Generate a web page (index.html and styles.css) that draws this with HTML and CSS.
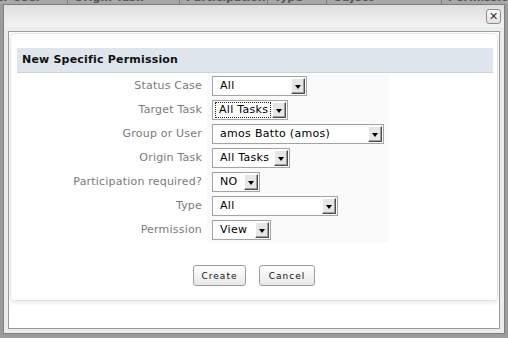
FILE: index.html
```html
<!DOCTYPE html>
<html lang="en">
<head>
  <meta charset="UTF-8" />
  <title>New Specific Permission</title>
  <link rel="stylesheet" href="styles.css">
</head>
<body>

  <div class="grid-head">
    <div class="grid-row">
      <div class="col c1">er User</div>
      <div class="col c2">Origin Task</div>
      <div class="col c3">Participation</div>
      <div class="col c4">Type</div>
      <div class="col c5">Object</div>
      <div class="col c6">Permission</div>
    </div>
  </div>

  <div class="dialog">
    <div class="titlebar">
      <span class="close">&#x2715;</span>
    </div>

    <div class="dialog-body">
      <div class="panel">
        <div class="form-box">
          <div class="form-title">New Specific Permission</div>

          <div class="form-grid">
            <label>Status Case</label>
            <div class="field"><span class="select" style="width:95px"><span class="val">All</span><span class="arrow"></span></span></div>

            <label>Target Task</label>
            <div class="field"><span class="select" style="width:76px"><span class="val focus">All Tasks</span><span class="arrow"></span></span></div>

            <label>Group or User</label>
            <div class="field"><span class="select" style="width:172px"><span class="val">amos Batto (amos)</span><span class="arrow"></span></span></div>

            <label>Origin Task</label>
            <div class="field"><span class="select" style="width:78px"><span class="val">All Tasks</span><span class="arrow"></span></span></div>

            <label>Participation required?</label>
            <div class="field"><span class="select" style="width:48px"><span class="val">NO</span><span class="arrow"></span></span></div>

            <label>Type</label>
            <div class="field"><span class="select" style="width:126px"><span class="val">All</span><span class="arrow"></span></span></div>

            <label>Permission</label>
            <div class="field"><span class="select" style="width:59px"><span class="val">View</span><span class="arrow"></span></span></div>
          </div>

          <div class="actions">
            <button class="btn create">Create</button>
            <button class="btn cancel">Cancel</button>
          </div>
        </div>
      </div>
    </div>
  </div>

</body>
</html>
```

FILE: styles.css
```css
:root {
  --backdrop: #9b9b9b;
  --label: #7a7a7a;
  --header-bg: #dfe5ec;
}

* {
  margin: 0;
  padding: 0;
  box-sizing: border-box;
  font-family: 'DejaVu Sans', Verdana, sans-serif;
}

body {
  width: 508px;
  height: 338px;
  overflow: hidden;
  background-color: var(--backdrop);
}

/* table header peeking out behind the overlay */
.grid-head {
  height: 4px;
  overflow: hidden;
  background-color: #a7a7a7;
}

.grid-row {
  display: flex;
  margin-top: -8px;
  height: 12px;
  line-height: 12px;
  font-size: 11px;
  font-weight: bold;
  color: #555;
}

.col {
  border-right: 1px solid #7d7d7d;
  padding-left: 6px;
  white-space: nowrap;
  overflow: hidden;
}

.c1 { width: 68px; padding-left: 0; text-indent: -4px; }
.c2 { width: 112px; }
.c3 { width: 88px; }
.c4 { width: 59px; }
.c5 { width: 115px; }
.c6 { flex: 1; border-right: none; }

/* dialog */
.dialog {
  margin: 0 3px;
  height: 330px;
  border: 1px solid #7f7f7f;
  background-color: #ececec;
  display: flex;
  flex-direction: column;
}

.titlebar {
  height: 22px;
  flex-shrink: 0;
  background: linear-gradient(#dedede, #f3f3f3);
  display: flex;
  justify-content: flex-end;
  align-items: flex-start;
  padding: 4px 3px 0 0;
}

.close {
  width: 15px;
  height: 15px;
  border: 1px solid #8e8e8e;
  border-radius: 3px;
  background: linear-gradient(#fafafa, #e2e2e2);
  color: #333;
  font-size: 11px;
  line-height: 13px;
  text-align: center;
}

.dialog-body {
  flex: 1;
  padding: 4px;
  display: flex;
}

.panel {
  flex: 1;
  border: 1px solid #8f9f9f;
  background-color: #fff;
  padding: 1px;
}

.form-box {
  height: 268px;
  border: 1px solid #e2e2e2;
  border-radius: 4px;
  box-shadow: 0 3px 3px rgba(0, 0, 0, 0.06);
  padding: 14px 4px 0 6px;
}

.form-title {
  height: 25px;
  background-color: var(--header-bg);
  border-bottom: 1px solid #c9d1da;
  font-size: 11px;
  font-weight: bold;
  color: #111;
  padding: 5px 0 0 5px;
  letter-spacing: 0.2px;
}

.form-grid {
  display: grid;
  grid-template-columns: 185px max-content;
  column-gap: 5px;
  margin-top: 1px;
  align-items: stretch;
}

.form-grid label {
  font-size: 11px;
  color: var(--label);
  text-align: right;
  line-height: 24px;
  letter-spacing: 0.2px;
}

.field {
  background-color: #fafafa;
  padding: 2px 5px 2px 5px;
  height: 24px;
}

.select {
  display: flex;
  align-items: stretch;
  height: 20px;
  border: 1px solid #a3a3a3;
  background-color: #fff;
  padding: 1px;
}

.val {
  flex: 1;
  font-size: 11px;
  color: #000;
  line-height: 16px;
  padding-left: 6px;
  white-space: nowrap;
  overflow: hidden;
  letter-spacing: 0.3px;
}

.val.focus {
  outline: 1px dotted #222;
  outline-offset: -1px;
  margin-right: 1px;
  padding-left: 4px;
  margin-left: 1px;
}

.arrow {
  width: 14px;
  flex-shrink: 0;
  background-color: #e6e6e6;
  border-top: 1px solid #fff;
  border-left: 1px solid #fff;
  border-right: 1px solid #4a4a4a;
  border-bottom: 1px solid #4a4a4a;
  box-shadow: inset -1px -1px 0 #a0a0a0;
  position: relative;
}

.arrow::after {
  content: "";
  position: absolute;
  left: 3px;
  top: 6px;
  border-left: 3px solid transparent;
  border-right: 3px solid transparent;
  border-top: 4px solid #000;
}

.actions {
  display: flex;
  justify-content: center;
  gap: 13px;
  margin-top: 23px;
  padding-right: 2px;
}

.btn {
  height: 21px;
  border: 1px solid #9c9c9c;
  border-radius: 3px;
  background: linear-gradient(#ffffff, #e8e8e8);
  font-size: 9px;
  letter-spacing: 1px;
  color: #111;
}

.create { width: 53px; }
.cancel { width: 56px; }
```
